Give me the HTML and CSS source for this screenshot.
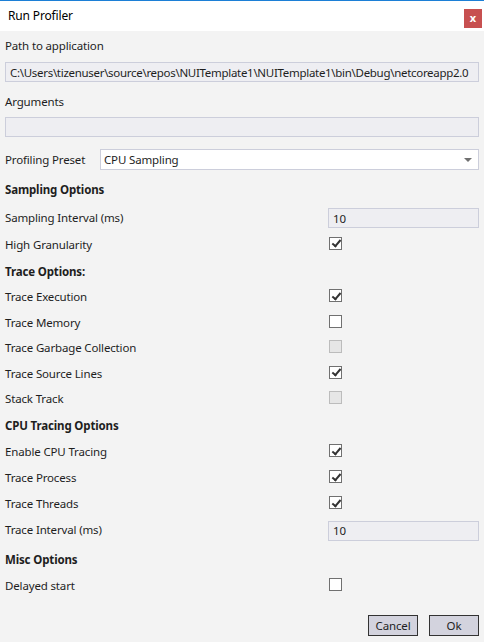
FILE: index.html
```html
<!DOCTYPE html>
<html>
<head>
<meta charset="utf-8">
<title>Run Profiler</title>
<link rel="stylesheet" href="styles.css">
</head>
<body>
<div class="window">
  <div class="titlebar">
    <span class="title">Run Profiler</span>
    <span class="close">x</span>
  </div>
  <div class="content">
    <div class="label-row">Path to application</div>
    <div class="textbox path"><span>C:\Users\tizenuser\source\repos\NUITemplate1\NUITemplate1\bin\Debug\netcoreapp2.0</span></div>
    <div class="label-row args-label">Arguments</div>
    <div class="textbox args"></div>
    <div class="preset-row">
      <span class="preset-label">Profiling Preset</span>
      <div class="dropdown">
        <span>CPU Sampling</span>
        <span class="arrow"></span>
      </div>
    </div>

    <div class="row heading">Sampling Options</div>
    <div class="row r-si"><span class="lbl">Sampling Interval (ms)</span><div class="textbox small">10</div></div>
    <div class="row r-1"><span class="lbl">High Granularity</span><span class="cb checked"></span></div>
    <div class="row heading r-1">Trace Options:</div>
    <div class="row tight"><span class="lbl">Trace Execution</span><span class="cb checked"></span></div>
    <div class="row tight"><span class="lbl">Trace Memory</span><span class="cb"></span></div>
    <div class="row tight"><span class="lbl">Trace Garbage Collection</span><span class="cb disabled"></span></div>
    <div class="row tight"><span class="lbl">Trace Source Lines</span><span class="cb checked"></span></div>
    <div class="row tight"><span class="lbl">Stack Track</span><span class="cb disabled"></span></div>
    <div class="row heading r-cpu">CPU Tracing Options</div>
    <div class="row"><span class="lbl">Enable CPU Tracing</span><span class="cb checked"></span></div>
    <div class="row"><span class="lbl">Trace Process</span><span class="cb checked"></span></div>
    <div class="row"><span class="lbl">Trace Threads</span><span class="cb checked"></span></div>
    <div class="row"><span class="lbl">Trace Interval (ms)</span><div class="textbox small">10</div></div>
    <div class="row heading r-misc">Misc Options</div>
    <div class="row"><span class="lbl">Delayed start</span><span class="cb"></span></div>

    <div class="footer">
      <button class="btn">Cancel</button>
      <button class="btn">Ok</button>
    </div>
  </div>
</div>
</body>
</html>
```

FILE: styles.css
```css
* { box-sizing: border-box; }
html, body { margin: 0; padding: 0; }
body {
  width: 484px;
  height: 642px;
  background: #f3f3f3;
  font-family: "Noto Sans", "Open Sans", sans-serif;
  font-size: 11.5px;
  letter-spacing: -0.15px;
  color: #1e1e1e;
  overflow: hidden;
}
.window {
  width: 484px;
  height: 642px;
  display: flex;
  flex-direction: column;
}
.titlebar {
  height: 31px;
  background: #ffffff;
  border-top: 1px solid #1c7fd6;
  display: flex;
  align-items: center;
  justify-content: space-between;
  padding: 0 2px 0 8px;
}
.title {
  font-size: 12px;
  color: #000;
  margin-top: -1px;
}
.close {
  width: 18px;
  height: 19px;
  background: #c75050;
  color: #fff;
  font-weight: bold;
  font-size: 11px;
  line-height: 17px;
  text-align: center;
  margin-top: 4px;
  letter-spacing: 0;
}
.content {
  padding: 4px 5px 0 5px;
  display: flex;
  flex-direction: column;
}
.label-row {
  height: 20px;
  display: flex;
  align-items: center;
}
.args-label { margin-top: 9px; }
.textbox {
  height: 20px;
  background: #eeeef2;
  border: 1px solid #cccedb;
  display: flex;
  align-items: center;
  padding: 0 4px;
  white-space: nowrap;
  overflow: hidden;
}
.path { margin-top: 7px; }
.path span { letter-spacing: -0.3px; }
.args { margin-top: 6px; }
.preset-row {
  margin-top: 12px;
  height: 21px;
  display: flex;
  align-items: center;
}
.preset-label { width: 95px; }
.dropdown {
  flex: 1;
  height: 21px;
  background: #fff;
  border: 1px solid #cccedb;
  display: flex;
  align-items: center;
  justify-content: space-between;
  padding: 0 4px 0 3px;
}
.arrow {
  width: 0;
  height: 0;
  border-left: 4px solid transparent;
  border-right: 4px solid transparent;
  border-top: 4px solid #707070;
  margin-right: 2px;
}
.row {
  height: 26px;
  display: flex;
  align-items: center;
}
.row.tight { height: 25.5px; }
.heading { font-weight: bold; margin-top: 6px; }
.r-si { margin-top: 2px; }
.r-1 { margin-top: 1px; }
.heading.r-1 { margin-top: 1px; }
.heading.r-cpu { margin-top: 1px; }
.heading.r-misc { margin-top: 4px; }
.lbl { width: 323px; }
.textbox.small {
  width: 151px;
  margin-top: 2px;
}
.cb {
  width: 13px;
  height: 13px;
  margin-left: 1px;
  margin-top: -2px;
  border: 1px solid #707070;
  background: #fff;
  position: relative;
}
.cb.checked::after {
  content: "";
  position: absolute;
  left: 3.5px;
  top: 0.5px;
  width: 3px;
  height: 7px;
  border-right: 2px solid #333;
  border-bottom: 2px solid #333;
  transform: rotate(40deg);
}
.cb.disabled {
  background: #e6e6e6;
  border-color: #bcbcbc;
}
.footer {
  margin-top: 16px;
  display: flex;
  justify-content: flex-end;
  gap: 11px;
}
.btn {
  width: 50px;
  height: 21px;
  background: #d3d3de;
  border: 1px solid #333;
  font-family: inherit;
  font-size: 11.5px;
  letter-spacing: -0.15px;
  color: #1e1e1e;
  padding: 0;
}
```
